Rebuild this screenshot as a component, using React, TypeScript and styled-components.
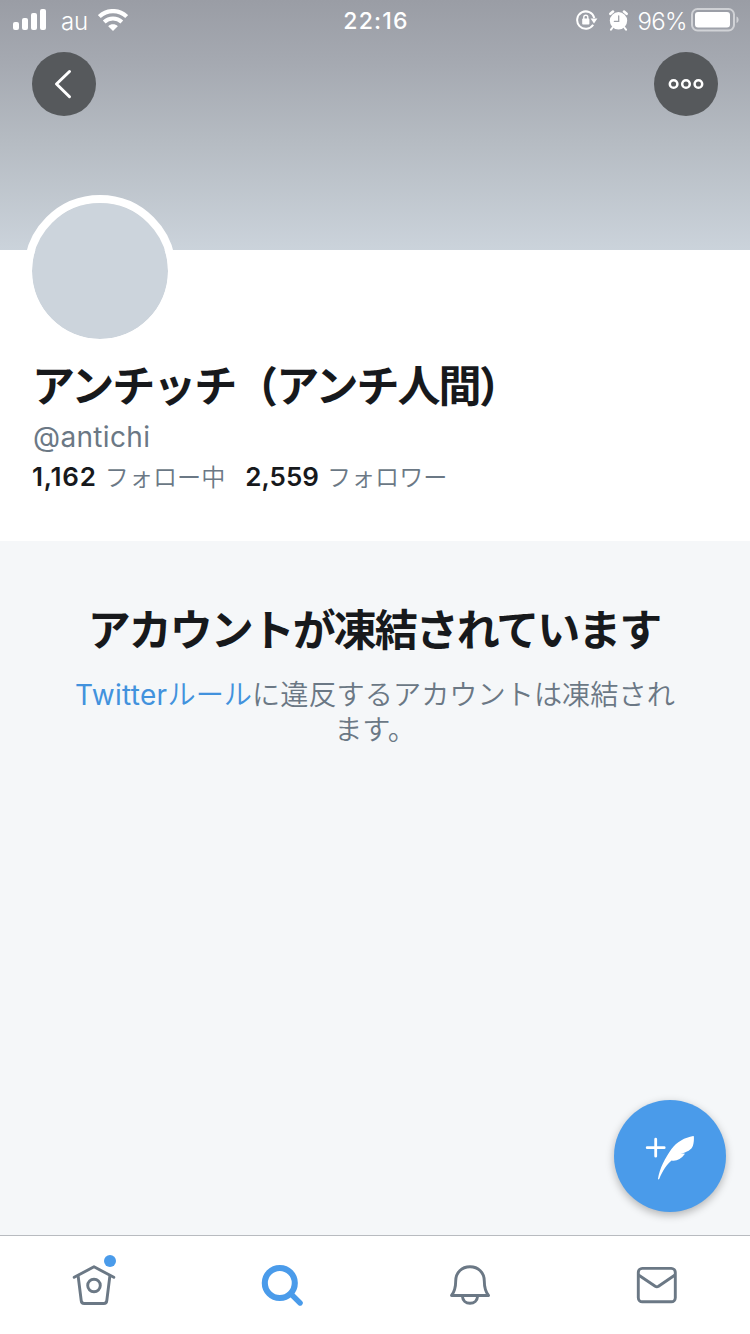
import React from 'react';
import styled, { createGlobalStyle } from 'styled-components';

const color = {
  ink: '#17191c',
  slate: '#6b7885',
  blue: '#4a9bea',
  link: '#4292dd',
  avatar: '#ccd4dc',
  page: '#f5f7f9',
};

const GlobalStyle = createGlobalStyle`
  * { box-sizing: border-box; }
  body {
    margin: 0;
    background: ${color.page};
    font-family: Inter, 'Noto Sans CJK JP', sans-serif;
    color: ${color.ink};
  }
  svg { display: block; }
  h1, h2, p { margin: 0; }
  button { border: 0; padding: 0; background: none; font: inherit; }
`;

const Screen = styled.div`
  position: relative;
  display: flex;
  flex-direction: column;
  width: 750px;
  height: 1334px;
  overflow: hidden;
`;

const Banner = styled.header`
  flex: none;
  height: 250px;
  background: linear-gradient(#9a9da5, #a5a9b1 25%, #b5bbc2 56%, #cbd3db);
`;

const StatusBar = styled.div`
  display: grid;
  grid-template-columns: 1fr auto 1fr;
  align-items: center;
  height: 40px;
  padding: 0 11px 0 13px;
  color: #fff;
`;

const StatusGroup = styled.div<{ $end?: boolean }>`
  display: flex;
  align-items: center;
  justify-content: ${(p) => (p.$end ? 'flex-end' : 'flex-start')};
  height: 39px;
`;

const Carrier = styled.span`
  width: 37px;
  margin-left: 14px;
  padding-top: 3px;
  font-size: 24px;
  font-weight: 350;
  line-height: 38px;
  letter-spacing: -0.2px;
`;

const Clock = styled.time`
  padding-top: 1px;
  font-size: 23px;
  font-weight: 500;
  line-height: 38px;
  letter-spacing: 1.2px;
`;

const Charge = styled.span`
  margin: 0 4px 0 9px;
  padding-top: 2px;
  font-size: 24px;
  font-weight: 350;
  line-height: 37px;
  letter-spacing: -0.6px;
`;

const BannerActions = styled.div`
  display: flex;
  justify-content: space-between;
  padding: 12px 32px 0;
`;

const RoundButton = styled.button`
  display: grid;
  place-items: center;
  width: 64px;
  height: 64px;
  border-radius: 50%;
  background: #56595c;
`;

const Profile = styled.section`
  flex: none;
  height: 291px;
  padding: 0 32px;
  background: #fff;
`;

const Avatar = styled.div`
  width: 152px;
  height: 152px;
  margin: -55px 0 0 -8px;
  border: 8px solid #fff;
  border-radius: 50%;
  background: ${color.avatar};
  background-clip: padding-box;
`;

const Heading = styled.h1`
  font: 700 43px/60px 'Noto Sans CJK JP', sans-serif;
  letter-spacing: -2px;
  white-space: nowrap;
`;

const Name = styled(Heading)`
  margin-top: 6px;
`;

const Paren = styled.span<{ $side: 'left' | 'right' }>`
  display: inline-block;
  line-height: 1;
  font-weight: 900;
  transform: scale(0.9, 0.98);
  transform-origin: ${(p) => (p.$side === 'left' ? '100% 55%' : '-18% 55%')};
`;

const Handle = styled.p`
  margin: 6px 0 0 1px;
  font-size: 28px;
  line-height: 36px;
  letter-spacing: 0.35px;
  color: ${color.slate};
`;

const Stats = styled.div`
  display: flex;
  gap: 20px;
  margin-top: 3px;
  line-height: 36px;
`;

const Stat = styled.div`
  display: flex;
  align-items: baseline;
  gap: 8px;
`;

const Count = styled.span<{ $tracking: number }>`
  font-size: 26px;
  font-weight: 600;
  letter-spacing: ${(p) => p.$tracking}px;
`;

const StatLabel = styled.span`
  font: 350 24.1px/36px 'Noto Sans CJK JP', sans-serif;
  color: ${color.slate};
`;

const Notice = styled.main`
  flex: 1;
  padding: 56px 70px 0;
  text-align: center;
  background: ${color.page};
`;

const NoticeTitle = styled(Heading)`
  margin-left: -2px;
`;

const NoticeText = styled.p`
  margin-top: 18px;
  font: 350 28.2px/35px 'Noto Sans CJK JP', sans-serif;
  color: ${color.slate};
`;

const RuleLink = styled.a`
  color: ${color.link};
`;

const Latin = styled.span`
  font: 400 28px/1 Inter, sans-serif;
  letter-spacing: 0.3px;
`;

const ComposeButton = styled.button`
  position: absolute;
  right: 24px;
  bottom: 122px;
  display: grid;
  place-items: center;
  width: 112px;
  height: 112px;
  border-radius: 50%;
  background: ${color.blue};
  box-shadow: 0 3px 8px rgba(0, 0, 0, 0.28);
`;

const TabBar = styled.nav`
  flex: none;
  display: grid;
  grid-template-columns: repeat(4, 1fr);
  height: 99px;
  border-top: 1px solid #b8bbc0;
  background: #fff;
`;

const Tab = styled.a<{ $active?: boolean }>`
  display: flex;
  justify-content: center;
  padding-top: 25px;
  color: ${(p) => (p.$active ? color.blue : color.slate)};
`;

const TabIcon = styled.span`
  position: relative;
  width: 48px;
  height: 48px;
`;

const UnreadDot = styled.i`
  position: absolute;
  top: -6px;
  right: 2px;
  width: 12px;
  height: 12px;
  border-radius: 50%;
  background: ${color.blue};
`;

const StatusIcons = styled.span`
  display: flex;
  align-items: center;
  gap: 11px;
`;

const SignalIcon = () => (
  <svg width="34" height="22" viewBox="0 0 34 22" fill="#fff">
    <rect x="0" y="13" width="6" height="8" rx="2" />
    <rect x="9" y="9" width="6" height="12" rx="2" />
    <rect x="18" y="4" width="6" height="17" rx="2" />
    <rect x="27" y="0" width="6" height="21" rx="2" />
  </svg>
);

const WifiIcon = () => (
  <svg width="30" height="22" viewBox="0 0 30 22" fill="none" stroke="#fff">
    <path d="M1.3 7.6C9 .2 21 .2 28.7 7.6" strokeWidth="4.2" />
    <path d="M6.2 13c5-4.7 12.6-4.7 17.6 0" strokeWidth="4" />
    <path d="M15 22l-4.800-4.800c2.600-2.600 7-2.600 9.600 0z" fill="#fff" stroke="none" />
  </svg>
);

const RotationLockIcon = () => (
  <svg width="22" height="20" viewBox="0 0 22 20" fill="none" stroke="#fff" strokeWidth="2">
    <path d="M17.2 14.8A8.7 8.7 0 1 1 18.3 8" />
    <path d="M14.6 8.4h6.8l-3.4 5z" fill="#fff" stroke="none" />
    <rect x="6.2" y="8.6" width="7.2" height="6" rx="0.8" fill="#fff" stroke="none" />
    <path d="M7.8 9V7.3a2 2 0 0 1 4 0V9" strokeWidth="1.4" />
  </svg>
);

const AlarmIcon = () => (
  <svg width="19" height="21" viewBox="0 0 19 21" fill="none" stroke="#fff" strokeLinecap="round">
    <circle cx="9.5" cy="10.8" r="8.7" fill="#fff" stroke="none" />
    <path d="M1.4 3.8l2.6-2.2M17.6 3.8l-2.6-2.2" strokeWidth="2.6" />
    <path d="M3.6 17.5L2 19.6M15.4 17.5l1.6 2.1" strokeWidth="2" />
    <path d="M9.7 5.8v5.6H5.4" stroke="#a0a3aa" strokeWidth="1.3" />
  </svg>
);

const BatteryIcon = () => (
  <svg width="48" height="24" viewBox="0 0 48 24">
    <rect x="1" y="1" width="42" height="21.5" rx="5.5" fill="none" stroke="#fff" strokeOpacity=".52" strokeWidth="2" />
    <rect x="4" y="4" width="35" height="15.5" rx="3" fill="#fff" />
    <path d="M45.500 8.500c2.800 1 2.800 5.600 0 6.600z" fill="#fff" fillOpacity=".52" />
  </svg>
);

const BackIcon = () => (
  <svg width="32" height="32" viewBox="0 0 32 32" fill="none" stroke="#fff" strokeWidth="3" strokeLinecap="round" strokeLinejoin="round">
    <path d="M21.500 3.500L8.500 16l13 12.700" />
  </svg>
);

const MoreIcon = () => (
  <svg width="36" height="12" viewBox="0 0 36 12" fill="none" stroke="#fff" strokeWidth="2.5">
    <circle cx="5.6" cy="6" r="3.8" />
    <circle cx="18" cy="6" r="3.8" />
    <circle cx="30.4" cy="6" r="3.8" />
  </svg>
);

const FeatherIcon = () => (
  <svg width="50" height="48" viewBox="0 0 50 48">
    <path d="M2.2 15.7h17M10.7 7.200v17" stroke="#fff" strokeWidth="2.8" strokeLinecap="round" />
    <path
      d="M48.200 3.900C40 5.300 31.500 9.800 26.300 17.200 20.500 25.500 14.500 36.500 13 46.700c0 1 .8 1 1.200.3C17.500 38.800 22 32.300 26.600 28.500c4.800.9 9.600-1.500 13-6.300.3-.5 0-.8-.5-.7l-3.700.3c6.600-1.600 11.300-4 12.600-8.300.9-3 1-6 .9-9-.1-.4-.3-.6-.7-.6z"
      fill="#fff"
    />
  </svg>
);

const HomeIcon = () => (
  <svg width="48" height="48" viewBox="0 0 48 48" fill="none" stroke="currentColor" strokeWidth="2.9" strokeLinecap="round" strokeLinejoin="round">
    <path d="M4.200 16.300L24 5.800l19.800 10.500" />
    <path d="M8.200 15.500l3 24c.2 2.200 1.200 3 3 3h19.600c1.800 0 2.800-.8 3-3l3-24" />
    <circle cx="24" cy="24.5" r="6.3" />
  </svg>
);

const SearchIcon = () => (
  <svg width="48" height="48" viewBox="0 0 48 48" fill="none" stroke="currentColor" strokeLinecap="round">
    <circle cx="22.8" cy="22" r="15" strokeWidth="6.1" />
    <path d="M34.500 33.500l8.600 8.500" strokeWidth="5.4" />
  </svg>
);

const BellIcon = () => (
  <svg width="48" height="48" viewBox="0 0 48 48" fill="none" stroke="currentColor" strokeWidth="2.9" strokeLinejoin="round">
    <path d="M6.500 34.500c3.500-4.500 4.200-7.800 4.200-14.500 0-8.500 6-14.300 14.300-14.300S39.300 11.500 39.300 20c0 6.700.7 10 4.200 14.500z" />
    <path d="M17.300 34.800c.4 4.800 3.600 7.500 7.700 7.500s7.300-2.700 7.700-7.500" />
  </svg>
);

const MailIcon = () => (
  <svg width="48" height="48" viewBox="0 0 48 48" fill="none" stroke="currentColor" strokeWidth="2.9" strokeLinejoin="round">
    <rect x="6.3" y="7.4" width="37" height="33.4" rx="4" />
    <path d="M6.500 14l16.700 11.300c1.100.7 2.200.7 3.300 0L43 14" />
  </svg>
);

const stats = [
  { count: '1,162', label: 'フォロー中', tracking: 0.8 },
  { count: '2,559', label: 'フォロワー', tracking: 0 },
];

const tabs = [
  { id: 'home', Icon: HomeIcon, unread: true },
  { id: 'search', Icon: SearchIcon, active: true },
  { id: 'notifications', Icon: BellIcon },
  { id: 'messages', Icon: MailIcon },
];

export default function App() {
  return (
    <Screen lang="ja">
      <GlobalStyle />
      <Banner>
        <StatusBar>
          <StatusGroup>
            <SignalIcon />
            <Carrier>au</Carrier>
            <WifiIcon />
          </StatusGroup>
          <Clock>22:16</Clock>
          <StatusGroup $end>
            <StatusIcons>
              <RotationLockIcon />
              <AlarmIcon />
            </StatusIcons>
            <Charge>96%</Charge>
            <BatteryIcon />
          </StatusGroup>
        </StatusBar>
        <BannerActions>
          <RoundButton>
            <BackIcon />
          </RoundButton>
          <RoundButton>
            <MoreIcon />
          </RoundButton>
        </BannerActions>
      </Banner>
      <Profile>
        <Avatar />
        <Name>
          アンチッチ<Paren $side="left">（</Paren>アンチ人間<Paren $side="right">）</Paren>
        </Name>
        <Handle>@antichi</Handle>
        <Stats>
          {stats.map((s) => (
            <Stat key={s.label}>
              <Count $tracking={s.tracking}>{s.count}</Count>
              <StatLabel>{s.label}</StatLabel>
            </Stat>
          ))}
        </Stats>
      </Profile>
      <Notice>
        <NoticeTitle as="h2">アカウントが凍結されています</NoticeTitle>
        <NoticeText>
          <RuleLink>
            <Latin>Twitter</Latin>ルール
          </RuleLink>
          に違反するアカウントは凍結されます。
        </NoticeText>
      </Notice>
      <TabBar>
        {tabs.map(({ id, Icon, active, unread }) => (
          <Tab key={id} $active={active}>
            <TabIcon>
              <Icon />
              {unread && <UnreadDot />}
            </TabIcon>
          </Tab>
        ))}
      </TabBar>
      <ComposeButton>
        <FeatherIcon />
      </ComposeButton>
    </Screen>
  );
}
